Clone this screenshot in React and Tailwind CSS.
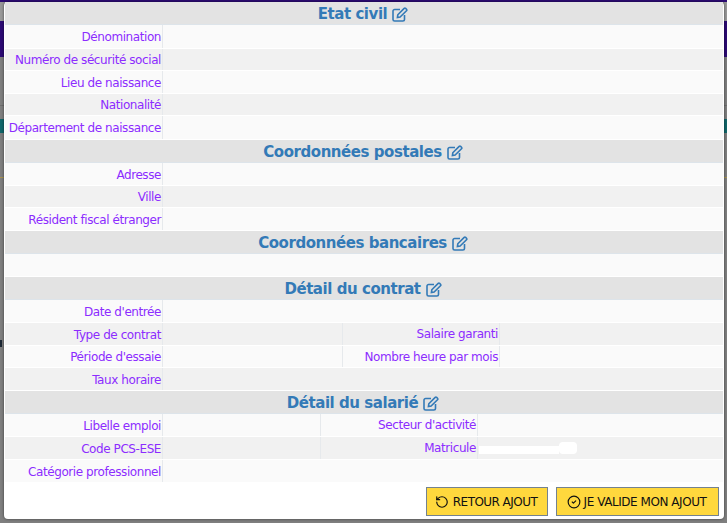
import { RotateCcw, CircleCheck } from "lucide-react";

const font = "font-['DejaVu_Sans',sans-serif]";

function EditIcon() {
  return (
    <svg width="16" height="15" viewBox="0 0 16 15" fill="none" stroke="currentColor" strokeWidth="1.6" className="ml-[5px] shrink-0">
      <path d="M8 2.5H2.6A1.6 1.6 0 0 0 1 4.1v8.3A1.6 1.6 0 0 0 2.6 14h8.3a1.6 1.6 0 0 0 1.6-1.6V8" />
      <path d="M5.8 7.8 12.2 1.4a1 1 0 0 1 1.4 0l.9.9a1 1 0 0 1 0 1.4L8.1 10.1l-2.7.5z" />
    </svg>
  );
}

function Header({ title }) {
  return (
    <div className="h-[23px] pt-[3px] pr-[2px] flex items-center justify-center bg-[#e3e3e3] border-b border-[#dde4ea] text-[15px] leading-none font-bold tracking-[-0.45px] text-[#337ab7]">
      <span>{title}</span>
      <EditIcon />
    </div>
  );
}

function Row({ label, h, odd, second, valueW }) {
  return (
    <div className={`${h} flex border-b border-white ${odd ? "bg-[#f1f1f1]" : "bg-[#fafafa]"}`}>
      {label && (
        <div className="w-[158px] shrink-0 flex items-center justify-end pt-px pr-px border-r border-[#e6e9ec] text-[#8c2cff] text-[12px] tracking-[-0.42px]">
          <span className="whitespace-nowrap">{label}</span>
        </div>
      )}
      {second && (
        <>
          <div className={`${valueW} shrink-0 border-r border-[#e6e9ec]`} />
          <div className={`${second.w} shrink-0 flex items-center justify-end pr-px border-r border-[#e6e9ec] text-[#8c2cff] text-[12px] tracking-[-0.42px]`}>
            <span className="whitespace-nowrap">{second.label}</span>
          </div>
          <div className="flex-1 flex items-center">
            {second.blank && (
              <div className="ml-[1px] flex items-end">
                <div className="w-[80px] h-[8px] bg-white" />
                <div className="w-[18px] h-[12px] bg-white rounded-sm" />
              </div>
            )}
          </div>
        </>
      )}
    </div>
  );
}

export default function App() {
  return (
    <div className={`${font} relative w-[727px] h-[523px] overflow-hidden bg-[#7f7f7f]`}>
      {/* page dimmed behind the modal */}
      <div className="absolute inset-x-0 top-0 h-[21px] bg-[#989898]" />
      <div className="absolute inset-x-0 top-0 h-[2px] bg-[#2c0a74]" />
      <div className="absolute inset-x-0 top-[21px] h-[36px] bg-[#2c0a74]" />
      <div className="absolute inset-x-0 top-[105px] h-px bg-[#6e6e6e]" />
      <div className="absolute inset-x-0 top-[119px] h-[14px] bg-[#11666a]" />
      <div className="absolute inset-x-0 top-[177px] h-px bg-[#a8924f]" />
      <div className="absolute left-0 top-[340px] w-[2px] h-[7px] bg-[#1b2733]" />
      <div className="absolute left-[4px] right-[3px] top-[2px] h-[517px] px-px bg-white rounded-[4px] shadow-[0_0_3px_rgba(0,0,0,0.55)] flex flex-col">
        <Header title="Etat civil" />
        <Row label="Dénomination" h="h-[24px]" />
        <Row label="Numéro de sécurité social" h="h-[22px]" odd />
        <Row label="Lieu de naissance" h="h-[23px]" />
        <Row label="Nationalité" h="h-[22px]" odd />
        <Row label="Département de naissance" h="h-[24px]" />
        <Header title="Coordonnées postales" />
        <Row label="Adresse" h="h-[23px]" />
        <Row label="Ville" h="h-[22px]" odd />
        <Row label="Résident fiscal étranger" h="h-[23px]" />
        <Header title="Coordonnées bancaires" />
        <Row h="h-[23px]" />
        <Header title="Détail du contrat" />
        <Row label="Date d'entrée" h="h-[23px]" />
        <Row label="Type de contrat" h="h-[23px]" odd valueW="w-[180px]" second={{ label: "Salaire garanti", w: "w-[157px]" }} />
        <Row label="Période d'essaie" h="h-[22px]" valueW="w-[180px]" second={{ label: "Nombre heure par mois", w: "w-[157px]" }} />
        <Row label="Taux horaire" h="h-[23px]" odd />
        <Header title="Détail du salarié" />
        <Row label="Libelle emploi" h="h-[23px]" valueW="w-[158px]" second={{ label: "Secteur d'activité", w: "w-[157px]" }} />
        <Row label="Code PCS-ESE" h="h-[23px]" odd valueW="w-[158px]" second={{ label: "Matricule", w: "w-[157px]", blank: true }} />
        <Row label="Catégorie professionnel" h="h-[23px]" />
        <div className="flex justify-end gap-2 pt-[4px] pr-[4px]">
          <button className="w-[122px] h-[29px] pr-[2px] flex items-center justify-center gap-[4px] bg-[#ffd83d] border border-[#74828f] text-[12px] tracking-[-0.55px] text-[#111]">
            <RotateCcw size={14} strokeWidth={2} />
            RETOUR AJOUT
          </button>
          <button className="w-[163px] h-[29px] pr-[2px] flex items-center justify-center gap-[3px] bg-[#ffd83d] border border-[#74828f] text-[12px] tracking-[-0.45px] text-[#111]">
            <CircleCheck size={14} strokeWidth={2} />
            JE VALIDE MON AJOUT
          </button>
        </div>
      </div>
    </div>
  );
}
